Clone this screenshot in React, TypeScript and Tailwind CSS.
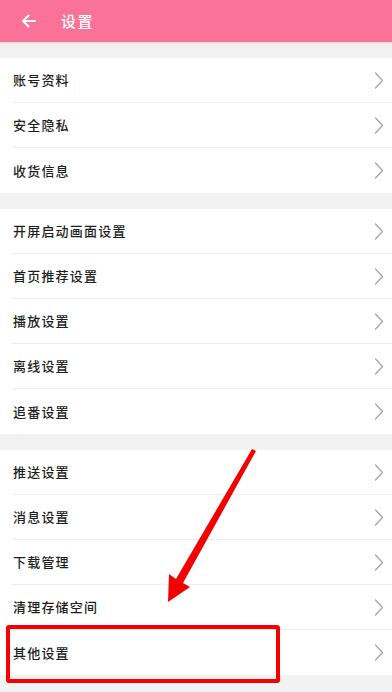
const groups: string[][] = [
  ["账号资料", "安全隐私", "收货信息"],
  ["开屏启动画面设置", "首页推荐设置", "播放设置", "离线设置", "追番设置"],
  ["推送设置", "消息设置", "下载管理", "清理存储空间", "其他设置"],
];

function Chevron() {
  return (
    <svg width="10" height="17" viewBox="0 0 10 17" fill="none" stroke="#a6a6a6" strokeWidth="1.3" strokeLinecap="round" strokeLinejoin="round">
      <path d="M1.5 1 8.5 8.5 1.5 16" />
    </svg>
  );
}

function Row({ label, last }: { label: string; last: boolean }) {
  return (
    <div className="flex h-[45px] items-center pl-3">
      <div
        className={`flex h-full flex-1 items-center justify-between pr-[8px] ${
          last ? "" : "border-b border-[#ededed]"
        }`}
      >
        <span className="pl-px text-[13px] font-medium tracking-[1.2px] text-[#1e1e1e]">{label}</span>
        <Chevron />
      </div>
    </div>
  );
}

export default function App() {
  return (
    <div
      className="relative min-h-[692px] bg-[#f2f2f2]"
      style={{ fontFamily: '"Noto Sans CJK SC", "Noto Sans", sans-serif' }}
    >
      {/* 顶栏 */}
      <div className="flex h-[42px] items-center bg-[#fb7299] pl-[19px] shadow-[0_1px_2px_rgba(0,0,0,0.12)]">
        <svg width="20" height="20" viewBox="0 0 20 20" fill="none" stroke="#fff" strokeWidth="2" strokeLinecap="round" strokeLinejoin="round">
          <path d="M16 10H4M9.5 4.5 4 10l5.5 5.5" />
        </svg>
        <span className="ml-[22px] text-[15px] font-medium tracking-[1.5px] text-white">设置</span>
      </div>

      <div className="flex flex-col gap-4 pt-4">
        {groups.map((g, gi) => (
          <div key={gi} className="bg-white">
            {g.map((label, i) => (
              <Row key={label} label={label} last={i === g.length - 1} />
            ))}
          </div>
        ))}
      </div>

      {/* 标注 */}
      <div className="pointer-events-none absolute left-[6px] top-[625px] h-[58px] w-[274px] rounded-[3px] border-[4px] border-[#f50000]" />
      <svg className="pointer-events-none absolute left-0 top-0" width="392" height="692">
        <polygon
          points="252,449 256,451 183,583 190,587 168,602 169,574 176,579"
          fill="#f50000"
        />
      </svg>
    </div>
  );
}
